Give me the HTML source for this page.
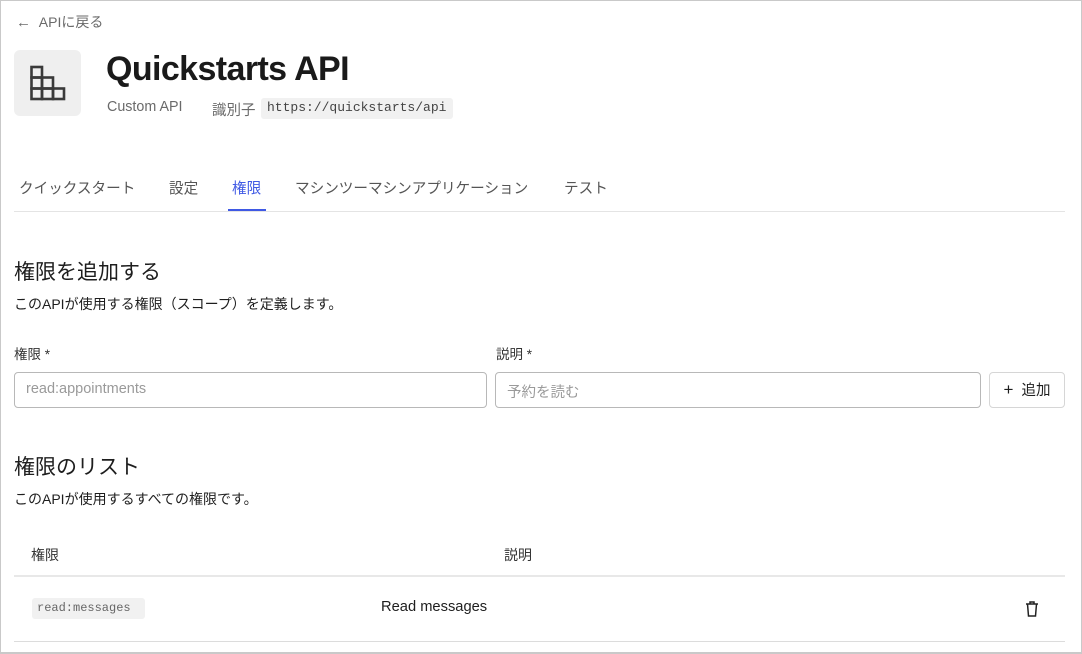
<!DOCTYPE html>
<html><head><meta charset="utf-8"><style>
*{box-sizing:border-box;margin:0;padding:0}
html,body{width:1082px;height:654px;overflow:hidden;background:#fff}
body{font-family:"Liberation Sans","Noto Sans CJK JP",sans-serif;color:#1e1e1e;position:relative}
.frame{position:absolute;left:0;top:0;width:1082px;height:654px;border:1px solid #c9c9c9;border-bottom:2px solid #c9c9c9}
.a{position:absolute;white-space:nowrap}
.mono{font-family:"Liberation Mono","DejaVu Sans Mono",monospace}
.pill{background:#f1f1f1;border-radius:3px;color:#555}
.input{position:absolute;height:36px;border:1px solid #b8b8b8;border-radius:4px;font-size:14.5px;color:#9a9a9a;padding:8px 11px}
</style></head><body>
<div class="frame"></div>
<div class="a" style="left:16px;top:12px;font-size:14px;color:#6a6a6a"><span style="font-size:15px">←</span>&nbsp;&nbsp;APIに戻る</div>
<div class="a" style="left:14px;top:50px;width:67px;height:66px;background:#efefef;border-radius:6px">
<svg width="67" height="66" viewBox="0 0 67 66"><g fill="none" stroke="#3a3a3a" stroke-width="2.6"><rect x="17.5" y="17" width="10.5" height="10.5"/><rect x="17.5" y="27.5" width="10.5" height="11"/><rect x="28" y="27.5" width="11" height="11"/><rect x="17.5" y="38.5" width="10.5" height="10.5"/><rect x="28" y="38.5" width="11" height="10.5"/><rect x="39" y="38.5" width="11" height="10.5"/></g></svg>
</div>
<div class="a" style="left:106px;top:50px;font-size:34px;font-weight:bold;color:#1a1a1a;letter-spacing:-0.6px">Quickstarts API</div>
<div class="a" style="left:107px;top:99px;font-size:14.3px;color:#6a6a6a">Custom API</div>
<div class="a" style="left:212px;top:99px;font-size:14.5px;color:#6a6a6a">識別子</div>
<div class="a mono pill" style="left:261px;top:98px;height:21px;width:192px;font-size:13px;padding:2px 6px;color:#444">https://quickstarts/api</div>
<div class="a" style="left:19px;top:177px;font-size:14.6px;color:#555">クイックスタート</div>
<div class="a" style="left:169px;top:177px;font-size:14.6px;color:#555">設定</div>
<div class="a" style="left:232px;top:177px;font-size:14.6px;color:#3f59e4">権限</div>
<div class="a" style="left:295px;top:177px;font-size:14.6px;color:#555">マシンツーマシンアプリケーション</div>
<div class="a" style="left:564px;top:177px;font-size:14.6px;color:#555">テスト</div>
<div class="a" style="left:14px;top:211px;width:1051px;height:1px;background:#e4e4e4"></div>
<div class="a" style="left:228px;top:209px;width:38px;height:2px;background:#3f59e4"></div>
<div class="a" style="left:14px;top:256px;font-size:21px;color:#1e1e1e">権限を追加する</div>
<div class="a" style="left:14px;top:294px;font-size:14px;color:#1e1e1e">このAPIが使用する権限（スコープ）を定義します。</div>
<div class="a" style="left:14px;top:343px;font-size:13.5px;color:#333">権限 *</div>
<div class="a" style="left:496px;top:343px;font-size:13.5px;color:#333">説明 *</div>
<div class="input" style="left:14px;top:372px;width:473px">read:appointments</div>
<div class="input" style="left:495px;top:372px;width:486px">予約を読む</div>
<div class="a" style="left:989px;top:372px;width:76px;height:36px;border:1px solid #d6d6d6;border-radius:4px;font-size:14.5px;color:#1e1e1e;text-align:center;line-height:34px"><span style="font-size:17px">+</span>&nbsp;&nbsp;追加</div>
<div class="a" style="left:14px;top:451px;font-size:21px;color:#1e1e1e">権限のリスト</div>
<div class="a" style="left:14px;top:489px;font-size:14px;color:#1e1e1e">このAPIが使用するすべての権限です。</div>
<div class="a" style="left:31px;top:545px;font-size:14px;color:#333">権限</div>
<div class="a" style="left:504px;top:545px;font-size:14px;color:#333">説明</div>
<div class="a" style="left:14px;top:575px;width:1051px;height:2px;background:#e8e8e8"></div>
<div class="a mono pill" style="left:32px;top:598px;height:21px;width:113px;font-size:12px;padding:3px 5px;color:#666">read:messages</div>
<div class="a" style="left:381px;top:599px;font-size:14.7px;color:#1e1e1e">Read messages</div>
<svg class="a" style="left:1024px;top:600px" width="16" height="18" viewBox="0 0 16 18"><g fill="none" stroke="#222" stroke-width="1.5"><path d="M2 4h12M6 4V2h4v2M3.5 4l1 12h7l1-12"/></g></svg>
<div class="a" style="left:14px;top:641px;width:1051px;height:1px;background:#dcdcdc"></div>
</body></html>
